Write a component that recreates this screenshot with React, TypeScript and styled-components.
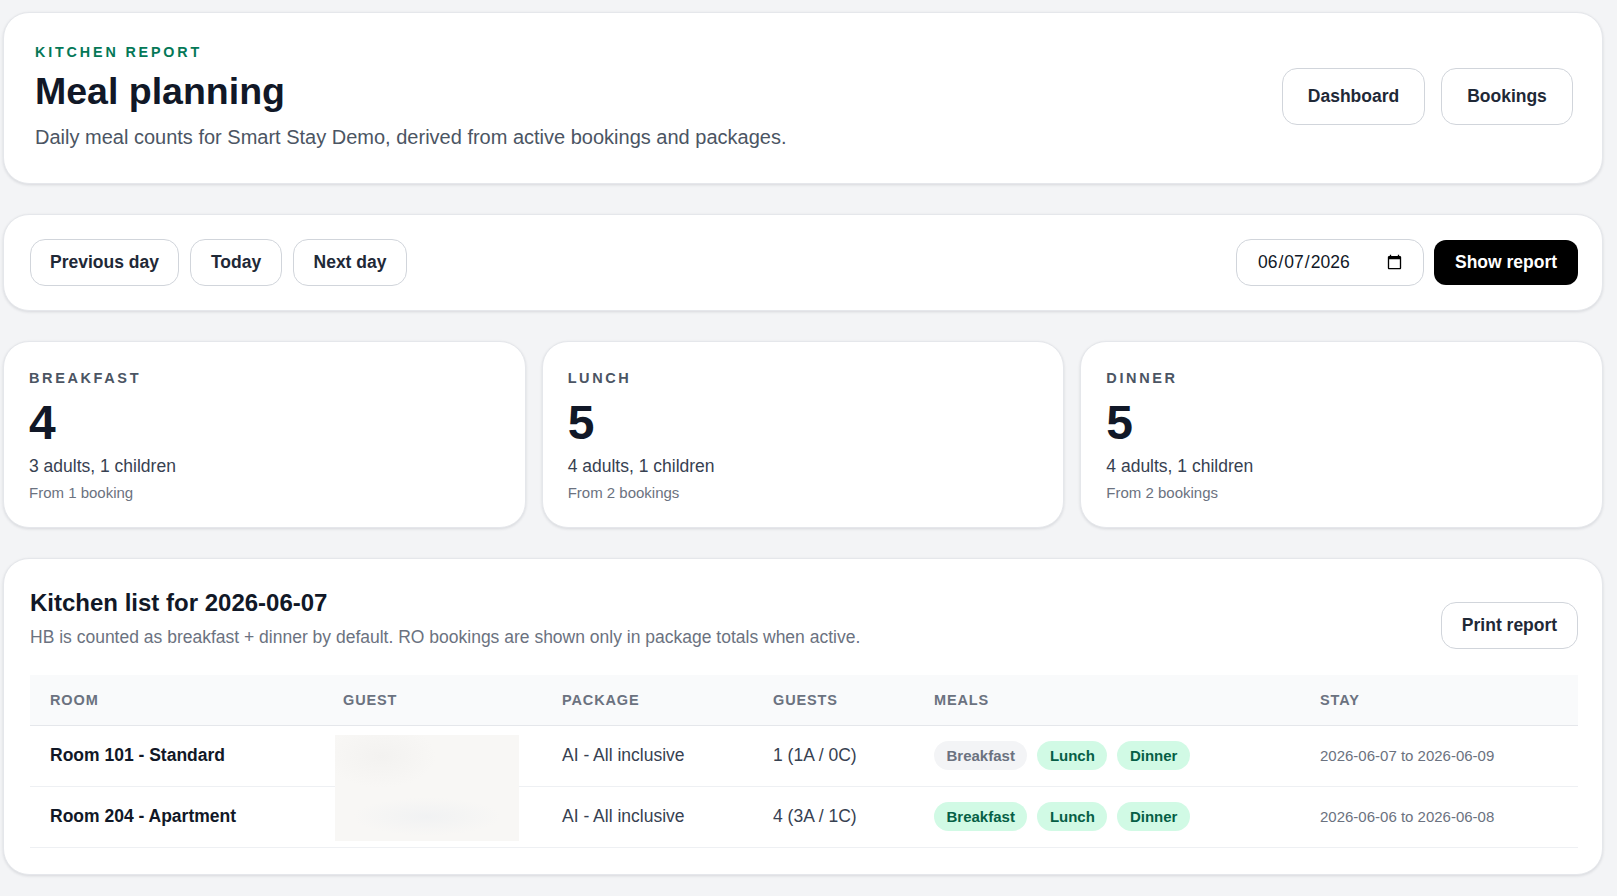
import React from "react";
import styled, { createGlobalStyle } from "styled-components";

const Global = createGlobalStyle`
  * { box-sizing: border-box; }
  html, body { margin: 0; padding: 0; background: #f3f4f6; }
  body { font-family: "Liberation Sans", Arial, sans-serif; color: #111827; }
`;

const Page = styled.div`
  display: flex;
  flex-direction: column;
  gap: 30px;
  width: 1600px;
  margin-left: 3px;
  padding: 12px 0 22px;
`;

const Card = styled.section<{ $pad?: string }>`
  background: #fff;
  border: 1px solid #e5e7eb;
  border-radius: 26px;
  box-shadow: 0 1px 3px rgba(15, 23, 42, 0.12);
  padding: ${(p) => p.$pad || "24px"};
`;

const HeaderCard = styled(Card)`
  display: flex;
  align-items: center;
  justify-content: space-between;
  min-height: 172px;
`;

const Kicker = styled.div`
  font-size: 14.3px;
  line-height: 16px;
  font-weight: 700;
  letter-spacing: 0.2em;
  color: #047857;
  text-transform: uppercase;
`;

const Title = styled.h1`
  margin: 9px 0 0;
  font-size: 37.5px;
  line-height: 44px;
  font-weight: 700;
  color: #111827;
`;

const Subtitle = styled.p`
  margin: 11px 0 0;
  font-size: 20px;
  line-height: 26px;
  color: #4b5563;
`;

const ButtonRow = styled.div<{ $gap?: number; $lift?: number }>`
  display: flex;
  align-items: center;
  gap: ${(p) => p.$gap ?? 12}px;
  margin-bottom: ${(p) => p.$lift ?? 0}px;
`;

const OutlineButton = styled.button<{ $h?: number; $w?: number }>`
  height: ${(p) => p.$h ?? 47}px;
  ${(p) => (p.$w ? `width: ${p.$w}px;` : "padding: 0 20px;")}
  border: 1px solid #d1d5db;
  border-radius: 15px;
  background: #fff;
  font-family: inherit;
  font-size: 17.5px;
  font-weight: 700;
  color: #1f2937;
  cursor: pointer;
`;

const DarkButton = styled.button`
  height: 45px;
  width: 144px;
  border: none;
  border-radius: 12px;
  background: #000;
  color: #fff;
  font-family: inherit;
  font-size: 17.5px;
  font-weight: 700;
  cursor: pointer;
`;

const Toolbar = styled(Card)`
  display: flex;
  align-items: center;
  justify-content: space-between;
  padding: 24px 24px 24px 26px;
`;

const DateInput = styled.input`
  height: 47px;
  width: 188px;
  padding: 0 18px 0 20px;
  border: 1px solid #d1d5db;
  border-radius: 15px;
  background: #fff;
  font-family: inherit;
  font-size: 17.5px;
  color: #111827;
`;

const Stats = styled.div`
  display: grid;
  grid-template-columns: repeat(3, 1fr);
  gap: 16px;
`;

const StatCard = styled(Card)`
  padding: 26px 25px 22px;
  height: 187px;
`;

const StatLabel = styled.div`
  font-size: 14.5px;
  line-height: 20px;
  font-weight: 700;
  letter-spacing: 0.18em;
  color: #4b5563;
`;

const StatNumber = styled.div`
  margin-top: 9px;
  font-size: 48px;
  line-height: 52px;
  font-weight: 700;
  color: #111827;
`;

const StatLine = styled.div`
  margin-top: 5px;
  font-size: 17.5px;
  line-height: 24px;
  color: #374151;
`;

const StatNote = styled.div`
  margin-top: 5px;
  font-size: 15px;
  line-height: 20px;
  color: #6b7280;
`;

const TableHead = styled.div`
  display: flex;
  align-items: flex-end;
  justify-content: space-between;
`;

const SectionTitle = styled.h2`
  margin: 0;
  font-size: 24px;
  line-height: 30px;
  font-weight: 700;
  color: #111827;
`;

const SectionNote = styled.p`
  margin: 7px 0 0;
  font-size: 17.5px;
  line-height: 24px;
  color: #6b7280;
`;

const TableWrap = styled.div`
  position: relative;
  margin-top: 26px;
`;

const Table = styled.table`
  width: 100%;
  border-collapse: collapse;
  table-layout: fixed;
`;

const Th = styled.th`
  height: 50px;
  padding: 0 20px;
  background: #f9fafb;
  border-bottom: 1px solid #e5e7eb;
  text-align: left;
  font-size: 14.5px;
  font-weight: 700;
  letter-spacing: 0.06em;
  color: #6b7280;
`;

const Td = styled.td<{ $tone?: "strong" | "body" | "muted" }>`
  height: 61px;
  padding: 0 20px;
  border-bottom: 1px solid #eef0f3;
  font-size: ${(p) => (p.$tone === "muted" ? "15px" : "17.5px")};
  font-weight: ${(p) => (p.$tone === "strong" ? 700 : 400)};
  color: ${(p) =>
    p.$tone === "strong" ? "#111827" : p.$tone === "muted" ? "#6b7280" : "#374151"};
`;

const Pills = styled.div`
  display: flex;
  gap: 10px;
`;

const Pill = styled.span<{ $on: boolean }>`
  display: inline-flex;
  align-items: center;
  height: 29px;
  padding: 0 12.5px;
  border-radius: 999px;
  font-size: 15px;
  font-weight: 700;
  background: ${(p) => (p.$on ? "#d1fae5" : "#f3f4f6")};
  color: ${(p) => (p.$on ? "#065f46" : "#6b7280")};
`;

const Redaction = styled.div`
  position: absolute;
  left: 305px;
  top: 60px;
  width: 184px;
  height: 106px;
  background:
    radial-gradient(ellipse 40% 18% at 50% 77%, #f1f2f3 0%, rgba(241,242,243,0) 100%),
    radial-gradient(ellipse 30% 30% at 25% 20%, #f3f2f0 0%, rgba(243,242,240,0) 100%),
    #f8f7f5;
`;

const cols = [293, 219, 211, 161, 386, 278];

type Row = {
  room: string;
  pkg: string;
  guests: string;
  meals: [string, boolean][];
  stay: string;
};

const rows: Row[] = [
  {
    room: "Room 101 - Standard",
    pkg: "AI - All inclusive",
    guests: "1 (1A / 0C)",
    meals: [
      ["Breakfast", false],
      ["Lunch", true],
      ["Dinner", true],
    ],
    stay: "2026-06-07 to 2026-06-09",
  },
  {
    room: "Room 204 - Apartment",
    pkg: "AI - All inclusive",
    guests: "4 (3A / 1C)",
    meals: [
      ["Breakfast", true],
      ["Lunch", true],
      ["Dinner", true],
    ],
    stay: "2026-06-06 to 2026-06-08",
  },
];

const stats = [
  { label: "BREAKFAST", n: 4, line: "3 adults, 1 children", note: "From 1 booking" },
  { label: "LUNCH", n: 5, line: "4 adults, 1 children", note: "From 2 bookings" },
  { label: "DINNER", n: 5, line: "4 adults, 1 children", note: "From 2 bookings" },
];

export default function App() {
  return (
    <>
      <Global />
      <Page>
        <HeaderCard $pad="28px 29px 30px 31px">
          <div>
            <Kicker>Kitchen report</Kicker>
            <Title>Meal planning</Title>
            <Subtitle>
              Daily meal counts for Smart Stay Demo, derived from active bookings and packages.
            </Subtitle>
          </div>
          <ButtonRow $gap={16} $lift={2}>
            <OutlineButton $h={57} $w={143}>Dashboard</OutlineButton>
            <OutlineButton $h={57} $w={132}>Bookings</OutlineButton>
          </ButtonRow>
        </HeaderCard>

        <Toolbar>
          <ButtonRow $gap={11}>
            <OutlineButton $w={149}>Previous day</OutlineButton>
            <OutlineButton $w={92}>Today</OutlineButton>
            <OutlineButton $w={114}>Next day</OutlineButton>
          </ButtonRow>
          <ButtonRow $gap={10}>
            <DateInput type="date" defaultValue="2026-06-07" />
            <DarkButton>Show report</DarkButton>
          </ButtonRow>
        </Toolbar>

        <Stats>
          {stats.map((s) => (
            <StatCard key={s.label}>
              <StatLabel>{s.label}</StatLabel>
              <StatNumber>{s.n}</StatNumber>
              <StatLine>{s.line}</StatLine>
              <StatNote>{s.note}</StatNote>
            </StatCard>
          ))}
        </Stats>

        <Card $pad="29px 24px 26px 26px">
          <TableHead>
            <div>
              <SectionTitle>Kitchen list for 2026-06-07</SectionTitle>
              <SectionNote>
                HB is counted as breakfast + dinner by default. RO bookings are shown only in
                package totals when active.
              </SectionNote>
            </div>
            <OutlineButton $w={137}>Print report</OutlineButton>
          </TableHead>
          <TableWrap>
            <Table>
              <colgroup>
                {cols.map((w, i) => (
                  <col key={i} style={{ width: w }} />
                ))}
              </colgroup>
              <thead>
                <tr>
                  <Th>ROOM</Th>
                  <Th>GUEST</Th>
                  <Th>PACKAGE</Th>
                  <Th>GUESTS</Th>
                  <Th>MEALS</Th>
                  <Th>STAY</Th>
                </tr>
              </thead>
              <tbody>
                {rows.map((r) => (
                  <tr key={r.room}>
                    <Td $tone="strong">{r.room}</Td>
                    <Td $tone="body" />
                    <Td $tone="body">{r.pkg}</Td>
                    <Td $tone="body">{r.guests}</Td>
                    <Td>
                      <Pills>
                        {r.meals.map(([m, on]) => (
                          <Pill key={m} $on={on}>
                            {m}
                          </Pill>
                        ))}
                      </Pills>
                    </Td>
                    <Td $tone="muted">{r.stay}</Td>
                  </tr>
                ))}
              </tbody>
            </Table>
            <Redaction />
          </TableWrap>
        </Card>
      </Page>
    </>
  );
}
